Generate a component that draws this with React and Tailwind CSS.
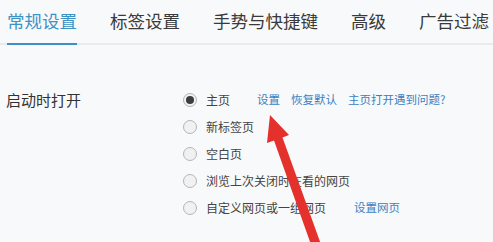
import React from 'react';

const tabs = ['常规设置', '标签设置', '手势与快捷键', '高级', '广告过滤'];

const Radio = ({ checked }) => (
  <span className="w-[14px] h-[14px] rounded-full border border-[#b5b5b5] bg-[#f1f1f1] flex items-center justify-center shrink-0">
    {checked && <span className="w-[8px] h-[8px] rounded-full bg-[#3c3c3c]" />}
  </span>
);

const Option = ({ checked, label, children }) => (
  <div className="flex items-center h-[27px]">
    <Radio checked={checked} />
    <span className="ml-[9px] text-[12px] text-[#444]">{label}</span>
    {children}
  </div>
);

export default function App() {
  return (
    <div
      className="relative w-[493px] h-[242px] overflow-hidden bg-[#f8f9fa]"
      style={{ fontFamily: '"Noto Sans CJK SC", "Noto Sans", sans-serif' }}
    >
      {/* tabs */}
      <div className="flex items-end h-[45px] border-b-2 border-[#ebebeb] pl-[7px] gap-[33px]">
        {tabs.map((t, i) => (
          <div
            key={t}
            className={`h-[45px] pt-[9px] text-[17.5px] leading-[24px] whitespace-nowrap -mb-[2px] ${
              i === 0 ? 'text-[#3d92c6] border-b-2 border-[#3d8fc4]' : 'text-[#3a3a3a]'
            }`}
          >
            {t}
          </div>
        ))}
      </div>

      {/* settings */}
      <div className="flex pt-[41px]">
        <div className="w-[183px] pl-[6px] text-[15px] leading-[27px] text-[#333]">启动时打开</div>
        <div className="flex flex-col">
          <Option checked label="主页">
            <span className="ml-[27px] text-[11.5px] text-[#3b7fc0]">设置</span>
            <span className="ml-[11px] text-[11.5px] text-[#3b7fc0]">恢复默认</span>
            <span className="ml-[11px] text-[11.5px] text-[#3b7fc0]">主页打开遇到问题?</span>
          </Option>
          <Option label="新标签页" />
          <Option label="空白页" />
          <Option label="浏览上次关闭时在看的网页" />
          <Option label="自定义网页或一组网页">
            <span className="ml-[28px] text-[11.5px] text-[#3b7fc0]">设置网页</span>
          </Option>
        </div>
      </div>

      {/* red annotation arrow */}
      <svg className="absolute left-0 top-0" width="493" height="242" viewBox="0 0 493 242">
        <polygon
          points="270,115 289,135 282.5,137.5 323,250 314,253 274,140.5 267,143"
          fill="#e5312b"
        />
      </svg>
    </div>
  );
}
